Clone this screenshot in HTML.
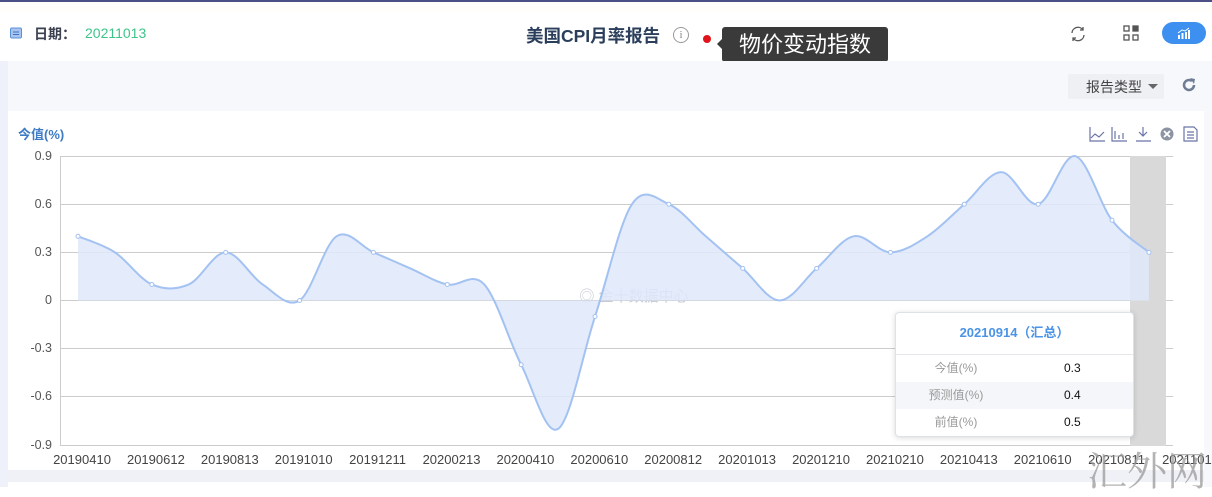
<!DOCTYPE html>
<html><head><meta charset="utf-8"><style>
*{margin:0;padding:0;box-sizing:border-box}
body{width:1212px;height:487px;overflow:hidden;background:#fff;font-family:"Liberation Sans","Noto Sans CJK SC",sans-serif;position:relative}
.abs{position:absolute}
</style></head><body>
<div class="abs" style="left:0;top:0;width:1212px;height:2px;background:#4b4f86"></div>
<div class="abs" style="left:0;top:2px;width:1212px;height:10px;background:#fffefa"></div>
<svg class="abs" style="left:10px;top:27px" width="12" height="12" viewBox="0 0 12 12"><rect x="0.5" y="1" width="11" height="10" rx="1.5" fill="#a8c4ee" stroke="#5b8fd8"/><line x1="3" y1="5" x2="9" y2="5" stroke="#3d74c6"/><line x1="3" y1="7.5" x2="9" y2="7.5" stroke="#3d74c6"/></svg>
<div class="abs" style="left:34px;top:24px;font-size:14px;font-weight:bold;color:#3c4150">日期：</div>
<div class="abs" style="left:85px;top:25px;font-size:14px;color:#3ec48a">20211013</div>
<div class="abs" style="left:526px;top:23px;font-size:17.5px;font-weight:bold;color:#2b3f5c">美国CPI月率报告</div>
<div class="abs" style="left:673px;top:27px;width:16px;height:16px;border:1px solid #999;border-radius:50%;font-size:11px;color:#888;text-align:center;line-height:14px;font-family:'Liberation Serif',serif">i</div>
<div class="abs" style="left:703px;top:35px;width:8px;height:8px;border-radius:50%;background:#e0141a"></div>
<div class="abs" style="left:717px;top:39px;width:0;height:0;border:5px solid transparent;border-right-color:#3a3a3a;border-left:0"></div>
<div class="abs" style="left:722px;top:27px;width:166px;height:35px;background:#3a3a3a;border-radius:3px;color:#fff;font-size:22px;line-height:35px;text-align:center">物价变动指数</div>
<svg class="abs" style="left:1069px;top:25px" width="18" height="18" viewBox="0 0 18 18" fill="none" stroke="#555" stroke-width="1.3"><path d="M3 8a6 6 0 0 1 11-3M15 10a6 6 0 0 1-11 3"/><path d="M14 2v3h-3M4 16v-3h3"/></svg>
<svg class="abs" style="left:1123px;top:25px" width="16" height="16" viewBox="0 0 16 16" fill="none" stroke="#555" stroke-width="1.3"><rect x="1" y="1" width="5" height="5"/><rect x="10" y="1" width="5" height="5" fill="#555"/><rect x="1" y="10" width="5" height="5"/><rect x="10" y="10" width="5" height="5"/></svg>
<div class="abs" style="left:1162px;top:22px;width:44px;height:22px;border-radius:11px;background:#3d8ff0"></div>
<svg class="abs" style="left:1177px;top:27px" width="14" height="12" viewBox="0 0 14 12" fill="#fff"><rect x="1" y="8" width="2" height="4"/><rect x="4.5" y="6" width="2" height="6"/><rect x="8" y="5" width="2" height="7"/><rect x="11" y="3" width="2" height="9"/><path d="M1 6 L5 3 L8 4 L12 1" stroke="#fff" fill="none"/></svg>
<div class="abs" style="left:0;top:61px;width:8px;height:426px;background:#eef1f9"></div>
<div class="abs" style="left:1204px;top:61px;width:8px;height:426px;background:#f7f8fc"></div>
<div class="abs" style="left:8px;top:61px;width:1196px;height:50px;background:#f7f8fc"></div>
<div class="abs" style="left:1068px;top:74px;width:96px;height:25px;background:#eef0f4;border-radius:2px"></div>
<div class="abs" style="left:1086px;top:77px;font-size:14px;color:#444">报告类型</div>
<div class="abs" style="left:1148px;top:84px;width:0;height:0;border:5px solid transparent;border-top-color:#666;border-bottom:0"></div>
<svg class="abs" style="left:1181px;top:77px" width="16" height="16" viewBox="0 0 16 16"><path d="M13 8a5 5 0 1 1-2-4" fill="none" stroke="#6f7c93" stroke-width="2.5"/><path d="M9 1l5 1-1 5z" fill="#6f7c93"/></svg>
<div class="abs" style="left:8px;top:111px;width:1196px;height:359px;background:#fff"></div>
<div class="abs" style="left:8px;top:470px;width:1196px;height:12px;background:#eff1f6"></div>
<div class="abs" style="left:18px;top:124px;font-size:13px;font-weight:bold;color:#3d7bc4">今值(%)</div>
<svg class="abs" style="left:1089px;top:126px" width="112" height="16" viewBox="0 0 112 16" fill="none" stroke="#6a74a8" stroke-width="1.2">
<path d="M1 1v14h15M2 12l4-4 4 3 5-5"/>
<path d="M23 1v14h15M26 13V5M30 13V9M34 13V7"/>
<path d="M54 1v9M50 6l4 4 4-4M47 15h15"/>
<circle cx="78" cy="8" r="6.5" fill="#8c93a3" stroke="none"/><path d="M75 5l6 6M81 5l-6 6" stroke="#fff" stroke-width="1.8"/>
<path d="M95 1h10l3 3v11H95zM98 6h7M98 9h7M98 12h7"/>
</svg>
<svg class="abs" style="left:0;top:0" width="1212" height="487" id="ch">
<g stroke="#ccc" stroke-width="1">
<line x1="60" y1="156.5" x2="1173" y2="156.5"/><line x1="60" y1="204.5" x2="1173" y2="204.5"/><line x1="60" y1="252.5" x2="1173" y2="252.5"/><line x1="60" y1="300.5" x2="1173" y2="300.5"/><line x1="60" y1="348.5" x2="1173" y2="348.5"/><line x1="60" y1="396.5" x2="1173" y2="396.5"/><line x1="60" y1="445.5" x2="1173" y2="445.5"/>
<line x1="60.5" y1="156" x2="60.5" y2="446"/>
</g>
<rect x="1130" y="156" width="36" height="290" fill="#d9d9d9"/>
<g font-size="12.5" fill="#555" text-anchor="end" font-family="Liberation Sans,sans-serif">
<text x="52" y="160">0.9</text><text x="52" y="208">0.6</text><text x="52" y="256">0.3</text><text x="52" y="304">0</text><text x="52" y="352">-0.3</text><text x="52" y="400">-0.6</text><text x="52" y="449">-0.9</text>
</g>
<g font-size="13" fill="#444" text-anchor="middle" font-family="Liberation Sans,sans-serif" id="xl"></g>
<text x="634" y="301" font-size="15" fill="#c4c8d2" text-anchor="middle">◎ 金十数据中心</text>
<path id="ar" fill="#dfe9fb" opacity="0.85"/>
<path id="ln" fill="none" stroke="#a3c2f2" stroke-width="2"/>
<g id="dots"></g>
</svg>
<div class="abs" style="left:895px;top:312px;width:239px;height:125px;background:#fff;border:1px solid #dde1e8;border-radius:4px;box-shadow:0 1px 6px rgba(0,0,0,.15)">
<div style="height:42px;border-bottom:1px solid #e5e7eb;text-align:center;line-height:40px;font-size:13px;font-weight:bold;color:#4a93e6">20210914（汇总）</div>
<div style="height:27px;display:flex;font-size:12px;line-height:27px"><span style="width:120px;text-align:center;color:#999">今值(%)</span><span style="margin-left:48px;color:#111">0.3</span></div>
<div style="height:27px;display:flex;font-size:12px;line-height:27px;background:#f4f6f9"><span style="width:120px;text-align:center;color:#999">预测值(%)</span><span style="margin-left:48px;color:#111">0.4</span></div>
<div style="height:27px;display:flex;font-size:12px;line-height:27px"><span style="width:120px;text-align:center;color:#999">前值(%)</span><span style="margin-left:48px;color:#111">0.5</span></div>
</div>
<div class="abs" style="left:1087px;top:440px;font-size:40px;color:#9a9a9a;opacity:.75;font-family:'Noto Serif CJK SC',serif">汇外网</div>
<script>
var v=[0.4,0.3,0.1,0.1,0.3,0.1,0,0.4,0.3,0.2,0.1,0.1,-0.4,-0.8,-0.1,0.6,0.6,0.4,0.2,0,0.2,0.4,0.3,0.4,0.6,0.8,0.6,0.9,0.5,0.3];
var p=v.map(function(y,i){return [78+i*36.93,300.5-y*160.5]});
var d="M"+p[0][0]+" "+p[0][1];
for(var i=0;i<p.length-1;i++){var a=p[i-1]||p[i],b=p[i],c=p[i+1],e=p[i+2]||c;
d+=" C"+(b[0]+(c[0]-a[0])/6)+" "+(b[1]+(c[1]-a[1])/6)+" "+(c[0]-(e[0]-b[0])/6)+" "+(c[1]-(e[1]-b[1])/6)+" "+c[0]+" "+c[1];}
document.getElementById('ln').setAttribute('d',d);
document.getElementById('ar').setAttribute('d',d+" L"+p[p.length-1][0]+" 300.5 L78 300.5Z");
var ds="",idx=[0,2,4,6,8,10,12,14,16,18,20,22,24,26,28,29];
idx.forEach(function(i){ds+='<circle cx="'+p[i][0]+'" cy="'+p[i][1]+'" r="2" fill="#fff" stroke="#a3c2f2"/>'});
document.getElementById('dots').innerHTML=ds;
var L=["20190410","20190612","20190813","20191010","20191211","20200213","20200410","20200610","20200812","20201013","20201210","20210210","20210413","20210610","20210811","20211013"];
var s="";L.forEach(function(t,i){s+='<text x="'+(82+i*73.9)+'" y="464">'+t+'</text>'});
document.getElementById('xl').innerHTML=s;
</script>
</body></html>
